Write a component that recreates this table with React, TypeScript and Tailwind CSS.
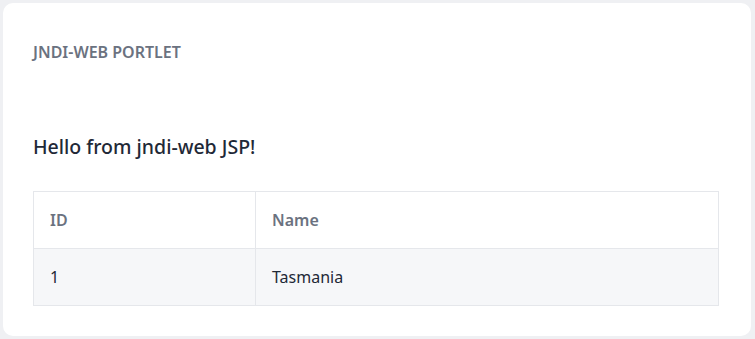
import React from "react";

const rows = [{ id: 1, name: "Tasmania" }];

const App: React.FC = () => {
  return (
    <div
      className="min-h-[339px] bg-[#eff0f3] p-[3px] pr-[4px]"
      style={{ fontFamily: '"Noto Sans", "Open Sans", sans-serif' }}
    >
      <section className="h-[333px] rounded-[10px] bg-white px-[30px] pt-[38px]">
        {/* Portlet title */}
        <h2 className="text-[16px] font-semibold uppercase leading-[22px] text-[#6b7280]">
          jndi-web Portlet
        </h2>

        <p className="mt-[71px] text-[19.5px] font-medium leading-[26px] text-[#1f2937]">
          Hello from jndi-web JSP!
        </p>

        {/* Table */}
        <table className="mt-[31px] w-[686px] border-collapse text-[16px]">
          <thead>
            <tr className="h-[57px]">
              <th className="w-[222px] border border-[#e5e7eb] px-4 text-left font-semibold text-[#6b7280]">
                ID
              </th>
              <th className="border border-[#e5e7eb] px-4 text-left font-semibold text-[#6b7280]">
                Name
              </th>
            </tr>
          </thead>
          <tbody>
            {rows.map((r) => (
              <tr key={r.id} className="h-[57px] bg-[#f6f7f9]">
                <td className="border border-[#e5e7eb] px-4 text-[#1f2937]">{r.id}</td>
                <td className="border border-[#e5e7eb] px-4 text-[#1f2937]">{r.name}</td>
              </tr>
            ))}
          </tbody>
        </table>
      </section>
    </div>
  );
};

export default App;
